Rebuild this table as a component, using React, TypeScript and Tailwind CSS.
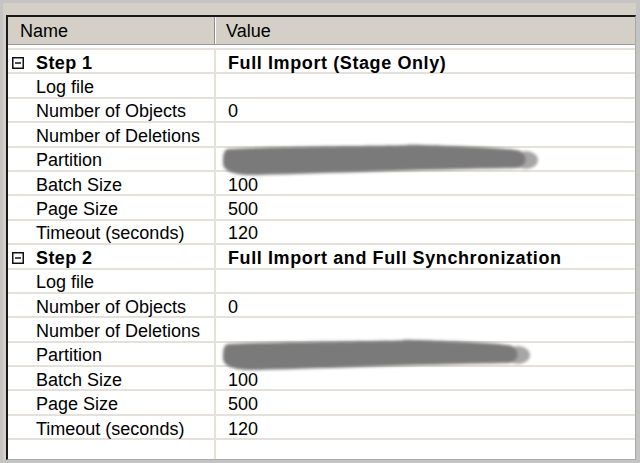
import React from 'react';

type Prop = { label: string; value?: string; redacted?: boolean };

const STEPS: { name: string; title: string }[] = [
  { name: 'Step 1', title: 'Full Import (Stage Only)' },
  { name: 'Step 2', title: 'Full Import and Full Synchronization' },
];

const PROPS: Prop[] = [
  { label: 'Log file' },
  { label: 'Number of Objects', value: '0' },
  { label: 'Number of Deletions' },
  { label: 'Partition', redacted: true },
  { label: 'Batch Size', value: '100' },
  { label: 'Page Size', value: '500' },
  { label: 'Timeout (seconds)', value: '120' },
];

const font = { fontFamily: '"Liberation Sans", Arial, sans-serif' };

function CollapseBox() {
  return (
    <svg width="12" height="12" viewBox="0 0 12 12" className="shrink-0">
      <rect x="0.75" y="0.75" width="10.5" height="10.5" fill="white" stroke="#111" strokeWidth="1.5" />
      <line x1="3" y1="6" x2="9" y2="6" stroke="#111" strokeWidth="1.5" />
    </svg>
  );
}

// smudge used to hide the partition value
function Redaction({ width }: { width: number }) {
  const w = width;
  return (
    <svg width={w + 12} height="38" viewBox={`0 0 ${w + 12} 38`} className="-ml-[10px] -my-[8px] shrink-0">
      <defs>
        <filter id={`smudge-${w}`} x="-10%" y="-40%" width="120%" height="180%">
          <feGaussianBlur stdDeviation="1.8" />
        </filter>
      </defs>
      <g filter={`url(#smudge-${w})`}>
        <ellipse cx={w - 8} cy="19" rx="12" ry="9" fill="#a6a6a6" />
        <path
          d={`M10 8 C 60 5, 200 5, ${w * 0.6} 4 S ${w - 24} 6, ${w - 14} 10 C ${w - 6} 14, ${w - 6} 24, ${w - 16} 27 C ${w * 0.6} 29, 120 32, 40 34 C 10 35, 4 28, 5 20 C 5 13, 6 9, 10 8 Z`}
          fill="#7a7a7a"
        />
      </g>
    </svg>
  );
}

function Row({ children, value }: { children: React.ReactNode; value: React.ReactNode }) {
  return (
    <div className="flex h-[24.4px] shrink-0 border-b-2 border-[#e4e1da] text-[18px] text-black leading-none">
      <div className="flex w-[208px] shrink-0 items-center gap-[12px] border-r-2 border-[#e4e1da] pt-[3px] pl-[4px]">
        {children}
      </div>
      <div className="flex flex-1 items-center pt-[3px] pl-[12px] whitespace-nowrap">{value}</div>
    </div>
  );
}

export default function App() {
  return (
    <div className="h-[463px] w-[640px] overflow-hidden bg-[#c4c4c4] pt-[3px] pr-[4px] pb-[3px] pl-[3px]" style={font}>
      <div className="flex h-full flex-col bg-[#d4d0c8] pt-[12px] pl-[3px]">
        <div className="flex flex-1 flex-col overflow-hidden border-t-2 border-l-2 border-[#1a1a1a] border-r border-b border-r-[#a9a9a9] border-b-[#a9a9a9] bg-white">
          <div className="flex h-[28px] shrink-0 border-b border-[#9a9a9a] bg-[#d4d0c8] text-[18px] text-black">
            <div className="flex w-[207px] items-center border-r border-[#8c8c8c] pt-[2px] pl-[12px]">Name</div>
            <div className="flex flex-1 items-center border-l border-white pt-[2px] pl-[10px]">Value</div>
          </div>
          <div className="h-[5px] shrink-0 border-b-2 border-[#e4e1da]" />
          {STEPS.map((step) => (
            <React.Fragment key={step.name}>
              <Row value={<span className="font-bold tracking-[0.6px]">{step.title}</span>}>
                <CollapseBox />
                <span className="font-bold tracking-[0.4px]">{step.name}</span>
              </Row>
              {PROPS.map((p) => (
                <Row
                  key={p.label}
                  value={p.redacted ? <Redaction width={step.name === 'Step 1' ? 316 : 308} /> : p.value}
                >
                  <span className="pl-[24px]">{p.label}</span>
                </Row>
              ))}
            </React.Fragment>
          ))}
          <Row value={null}>
            <span />
          </Row>
        </div>
      </div>
    </div>
  );
}
